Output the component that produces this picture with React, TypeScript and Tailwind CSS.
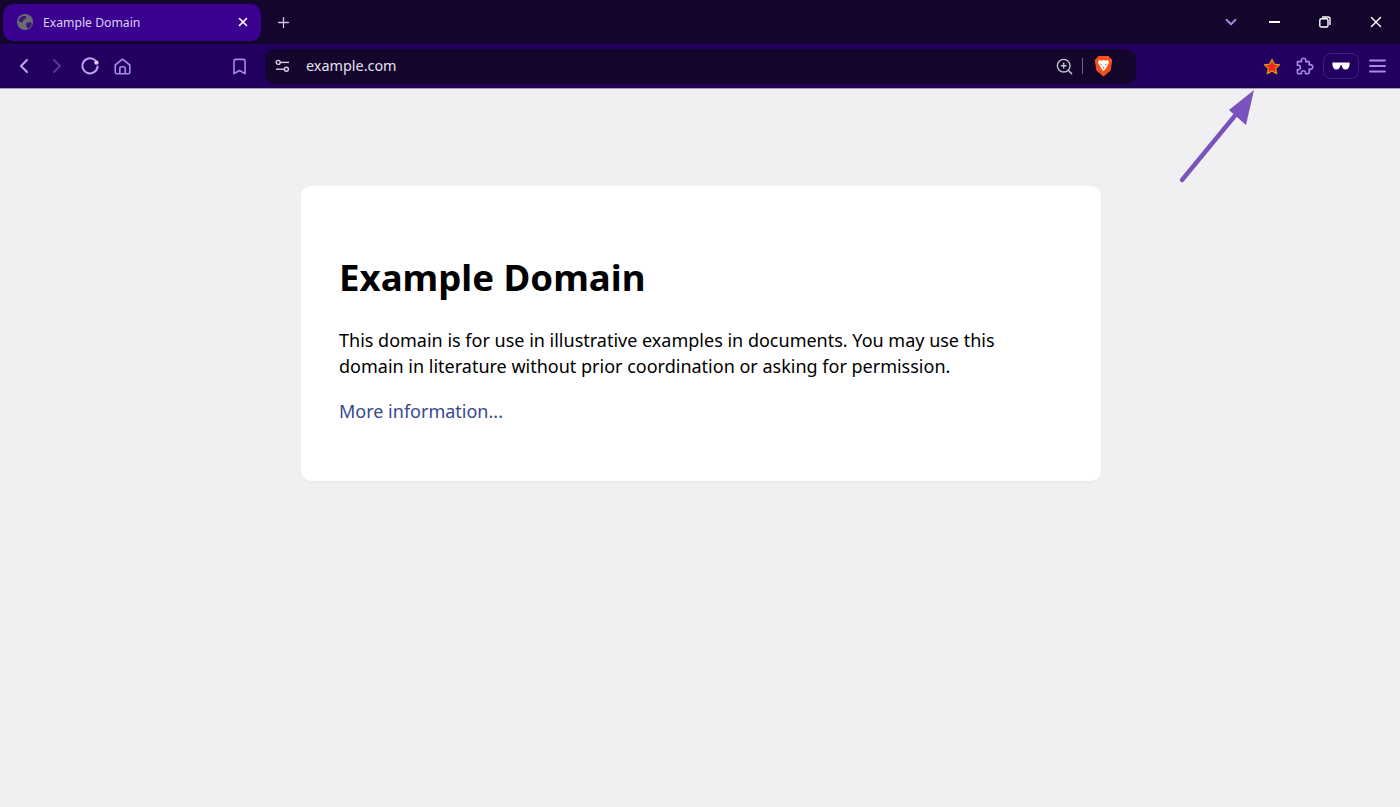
import { ChevronDown, ChevronLeft, ChevronRight, Plus, X, Bookmark, ZoomIn } from "lucide-react"

const uiFont = "font-['Noto_Sans','Open_Sans',sans-serif]"

function GlobeFavicon() {
  return (
    <svg width="16" height="16" viewBox="0 0 16 16">
      <circle cx="8" cy="8" r="8" fill="#6b6b78" />
      <path d="M3 3.5 C5 2 8 1.5 9.5 2.5 L8.5 5 L6.5 5.5 L6 8 L3.5 8.5 L1.5 6.5 Z" fill="#3a1a70" />
      <path d="M9 9 L13 8 L15 9.5 C14.5 12 13 13.5 11 14.5 L9.5 13 Z" fill="#3a1a70" />
    </svg>
  )
}

function BraveIcon() {
  return (
    <svg width="19" height="22" viewBox="0 0 19 22">
      <path d="M4.5 1 L14.5 1 L16.5 3.2 L18.3 5 L16.6 15.5 L9.5 21.5 L2.4 15.5 L0.7 5 L2.5 3.2 Z" fill="#f4511e" />
      <path d="M5 5 L7.5 5.8 L9.5 5 L11.5 5.8 L14 5 L15 7.5 L13.5 10.5 L12 13 L11 14.5 L9.5 16 L8 14.5 L7 13 L5.5 10.5 L4 7.5 Z" fill="#fff" />
      <path d="M6.2 8.6 L8 9.6 L7 10.6 Z M12.8 8.6 L11 9.6 L12 10.6 Z M8.4 12 H10.6 L9.5 13.4 Z" fill="#f4511e" />
    </svg>
  )
}

function RestoreIcon() {
  return (
    <svg width="12" height="12" viewBox="0 0 12 12" fill="none" stroke="#fff" strokeWidth="1.4">
      <rect x="0.8" y="2.8" width="8.2" height="8.2" rx="1.6" />
      <path d="M3 1 H9.2 C10.3 1 11 1.7 11 2.8 V9" />
    </svg>
  )
}

function ReloadIcon() {
  return (
    <svg width="18" height="18" viewBox="0 0 18 18" fill="none">
      <path d="M14.6 3.6 A7.6 7.6 0 1 0 16.6 9.4" stroke="#b9a2f0" strokeWidth="2" strokeLinecap="round" />
      <circle cx="15.4" cy="5.6" r="2.2" fill="#d8ccf8" />
    </svg>
  )
}

function HomeIcon() {
  return (
    <svg width="17" height="17" viewBox="0 0 17 17" fill="none" stroke="#a78be8" strokeWidth="1.6" strokeLinejoin="round">
      <path d="M1.2 7 L8.5 1.2 L15.8 7 V14.2 C15.8 15.2 15.2 15.8 14.2 15.8 H2.8 C1.8 15.8 1.2 15.2 1.2 14.2 Z" />
      <path d="M5.8 15.8 V10.4 C5.8 9.4 6.6 8.7 7.5 8.7 H9.5 C10.4 8.7 11.2 9.4 11.2 10.4 V15.8" />
    </svg>
  )
}

function PuzzleIcon() {
  return (
    <svg width="18" height="18" viewBox="0 0 18 18" fill="none" stroke="#a78be8" strokeWidth="1.6" strokeLinejoin="round">
      <path d="M2 4.6 H5.6 C5 3.8 5.2 1.2 7.6 1.2 C10 1.2 10.2 3.8 9.6 4.6 H13.2 V8 C14 7.4 16.8 7.6 16.8 10 C16.8 12.4 14 12.6 13.2 12 V15.6 C13.2 16.3 12.8 16.8 12 16.8 H9.4 C9.8 15.8 9.4 13.8 7.4 13.8 C5.4 13.8 5 15.8 5.4 16.8 H2.8 C2 16.8 1.4 16.3 1.4 15.6 V12.6 C2.6 13 4.4 12.2 4.4 10.4 C4.4 8.6 2.6 7.8 1.4 8.2 V5.2 C1.4 4.9 1.6 4.6 2 4.6 Z" />
    </svg>
  )
}

function StarIcon() {
  return (
    <svg width="18" height="17" viewBox="0 0 18 17">
      <path d="M9 1.4 L11.2 6.1 L16.6 6.8 L12.7 10.4 L13.7 15.6 L9 13 L4.3 15.6 L5.3 10.4 L1.4 6.8 L6.8 6.1 Z" fill="#f3241c" stroke="#dd9c12" strokeWidth="1.2" strokeLinejoin="round" />
    </svg>
  )
}

function GlassesIcon() {
  return (
    <svg width="18" height="8" viewBox="0 0 18 8">
      <path d="M0.4 0.5 H17.6 V2 C17.6 5.5 16 7.5 13.6 7.5 C11.4 7.5 10 6 9.6 3.2 H8.4 C8 6 6.6 7.5 4.4 7.5 C2 7.5 0.4 5.5 0.4 2 Z" fill="#fff" />
    </svg>
  )
}

function SiteSettingsIcon() {
  return (
    <svg width="15" height="14" viewBox="0 0 15 14" fill="none" stroke="#d8d0e8" strokeWidth="1.4">
      <circle cx="3.2" cy="3.4" r="2" />
      <path d="M5.2 3.4 H14" />
      <circle cx="11.4" cy="10.2" r="2" />
      <path d="M1 10.2 H9.4" />
    </svg>
  )
}

function MenuIcon() {
  return (
    <svg width="17" height="14" viewBox="0 0 17 14" fill="none" stroke="#a78be8" strokeWidth="1.8" strokeLinecap="round">
      <path d="M1 1.5 H16 M1 7 H16 M1 12.5 H16" />
    </svg>
  )
}

function Arrow() {
  return (
    <svg className="absolute left-[1176px] top-[88px]" width="84" height="98" viewBox="0 0 84 98" fill="none">
      <path d="M6 92 L62 24" stroke="#7a52bd" strokeWidth="4.4" strokeLinecap="round" />
      <path d="M78 2 L70 37 L53 22 Z" fill="#7a52bd" />
    </svg>
  )
}

export default function App() {
  return (
    <div className={`relative h-[807px] w-[1400px] overflow-hidden bg-[#f0f0f2] ${uiFont}`}>
      {/* Tab strip */}
      <div className="flex h-11 items-center bg-[#14052c] pl-[3px]">
        <div className="flex h-[37px] w-[258px] items-center rounded-[10px] bg-[#3a0090] pl-[14px] pr-[11px]">
          <GlobeFavicon />
          <span className="ml-[10px] flex-1 pt-[2px] text-[12.2px] text-[#dcd2f4]">Example Domain</span>
          <X size={14} strokeWidth={2.8} className="text-white" />
        </div>
        <Plus size={17} strokeWidth={1.8} className="ml-[14px] text-[#cfc6e2]" />
        <div className="flex-1" />
        <ChevronDown size={18} strokeWidth={2.4} className="text-[#a78be8]" />
        <div className="ml-[29px] h-[2px] w-[11px] bg-white" />
        <div className="ml-[39px]"><RestoreIcon /></div>
        <X size={18} strokeWidth={1.9} className="ml-[36px] mr-[15px] text-white" />
      </div>

      {/* Toolbar */}
      <div className="flex h-[45px] items-center border-b border-b-[#a79ac0] bg-[#22005f] shadow-[inset_0_-3px_0_#1e0352]">
        <ChevronLeft size={24} strokeWidth={1.9} className="ml-[12px] text-[#c0aef2]" />
        <ChevronRight size={24} strokeWidth={1.9} className="ml-[9px] text-[#57399b]" />
        <div className="ml-[12px]"><ReloadIcon /></div>
        <div className="ml-[15px]"><HomeIcon /></div>
        <Bookmark size={19} strokeWidth={2} className="ml-[99px] text-[#a78be8]" />

        {/* Address bar */}
        <div className="ml-[16px] flex h-[35px] w-[871px] items-center rounded-[10px] bg-[#14052c] pl-[10px] pr-[23px]">
          <SiteSettingsIcon />
          <span className="ml-[16px] flex-1 text-[14.4px] text-[#e6e1ef]">example.com</span>
          <ZoomIn size={19} strokeWidth={1.8} className="text-[#c7c2d0]" />
          <div className="ml-[8px] mr-[11px] h-[16px] w-px bg-[#6c6480]" />
          <BraveIcon />
        </div>

        <div className="ml-[127px]"><StarIcon /></div>
        <div className="ml-[15px]"><PuzzleIcon /></div>
        <div className="ml-[9px] flex h-[26px] w-[36px] items-center justify-center rounded-[8px] border border-[#3e2180]">
          <GlassesIcon />
        </div>
        <div className="ml-[10px]"><MenuIcon /></div>
      </div>

      {/* Page */}
      <div className="flex justify-center pt-[97px]">
        <div className="ml-[2px] h-[295px] w-[800px] rounded-[10px] bg-white px-[39px] pt-[67px] text-black shadow-[0_2px_3px_rgba(0,0,0,0.02)]">
          <h1 className="-ml-px text-[36.6px] font-bold leading-[48px]">Example Domain</h1>
          <p className="mt-[26px] -ml-px text-[18px] leading-[26px]">
            This domain is for use in illustrative examples in documents. You may use this
            <br />
            domain in literature without prior coordination or asking for permission.
          </p>
          <a className="-ml-px mt-[19px] block text-[18px] leading-[26px] text-[#38488f]">More information...</a>
        </div>
      </div>

      <Arrow />
    </div>
  )
}
